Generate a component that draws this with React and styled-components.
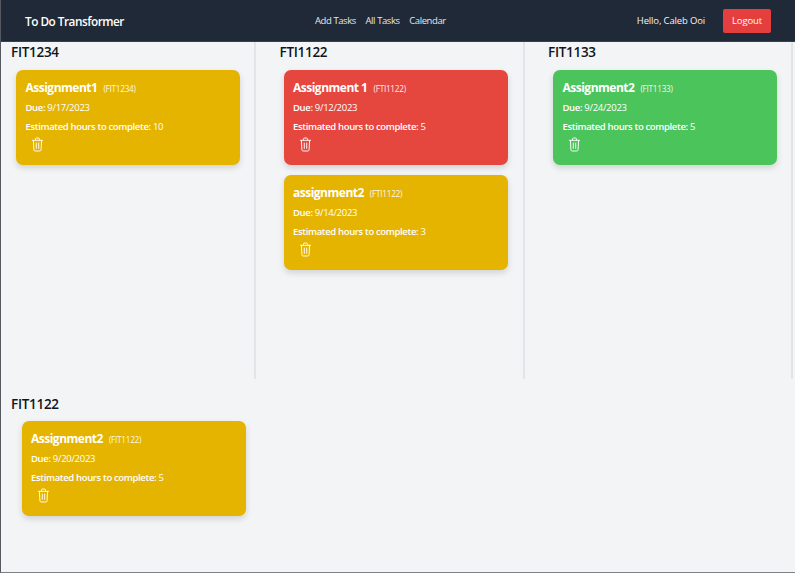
import React from "react";
import styled, { createGlobalStyle } from "styled-components";

const GlobalStyle = createGlobalStyle`
  html, body {
    margin: 0;
    padding: 0;
    height: 100%;
    background: #f3f4f6;
  }
  body {
    font-family: "Open Sans", "Noto Sans", sans-serif;
  }
`;

const Page = styled.div`
  width: 795px;
  height: 573px;
  box-sizing: border-box;
  overflow: hidden;
  background: #f3f4f6;
  border-left: 1px solid #55595f;
  border-bottom: 1px solid #7d8085;
`;

const Nav = styled.nav`
  height: 42px;
  box-sizing: border-box;
  background: #1f2937;
  border-bottom: 1px solid #374151;
  display: flex;
  justify-content: space-between;
  align-items: center;
  padding: 0 24px;
  color: #fff;
`;

const Brand = styled.div`
  font-size: 11.8px;
  font-weight: 600;
  letter-spacing: -0.5px;
`;

const NavLinks = styled.div`
  display: flex;
  gap: 9.5px;
  font-size: 9.5px;
  letter-spacing: -0.4px;
  color: #e5e7eb;
`;

const UserArea = styled.div`
  display: flex;
  align-items: center;
  gap: 18px;
  font-size: 9.5px;
  letter-spacing: -0.15px;
  color: #f3f4f6;
`;

const LogoutButton = styled.button`
  width: 48px;
  height: 24px;
  border: 0;
  padding: 0;
  border-radius: 2px;
  background: #e53e3e;
  color: #fff;
  font: inherit;
  letter-spacing: inherit;
`;

const Columns = styled.div`
  display: grid;
  grid-template-columns: repeat(3, 255px);
  column-gap: 13.5px;
  height: 337px;
`;

const Column = styled.section`
  box-sizing: border-box;
  padding-left: 10px;
  border-right: 2px solid #e2e4e8;
`;

const LowerColumn = styled.section`
  box-sizing: border-box;
  width: 268px;
  padding: 15px 0 0 10px;
`;

const Heading = styled.h2`
  margin: 0;
  font-size: 13.5px;
  line-height: 20px;
  font-weight: 600;
  letter-spacing: -0.3px;
  color: #0f1520;
`;

const Stack = styled.div`
  display: flex;
  flex-direction: column;
  gap: 10px;
  margin: ${props => props.$top}px 0 0 ${props => props.$indent}px;
`;

const Card = styled.article`
  width: 224px;
  height: 95px;
  box-sizing: border-box;
  padding: 10px 9.5px;
  border-radius: 7px;
  background: ${props => props.$color};
  box-shadow: 0 3px 6px rgba(0, 0, 0, 0.14);
  color: #fff;
`;

const TitleRow = styled.div`
  display: flex;
  align-items: baseline;
  gap: 6px;
  height: 16px;
`;

const Title = styled.span`
  font-size: 12px;
  line-height: 16px;
  font-weight: 700;
  letter-spacing: -0.5px;
`;

const Code = styled.span`
  font-size: 8.2px;
  letter-spacing: -0.25px;
  opacity: 0.9;
`;

const Line = styled.div`
  margin-top: 5px;
  font-size: 9.5px;
  line-height: 14px;
  font-weight: 400;
  letter-spacing: -0.3px;

  b {
    font-weight: 600;
    letter-spacing: -0.35px;
  }
`;

const DeleteButton = styled.button`
  display: block;
  border: 0;
  background: none;
  padding: 0;
  margin: 3px 0 0 5.5px;
  width: 13px;
  height: 15px;
  color: #fff;
`;

const TrashIcon = () => (
  <svg viewBox="0 0 14 16" width="13" height="15" fill="none" stroke="currentColor" strokeWidth="1" strokeLinecap="round" strokeLinejoin="round">
    <path d="M1.5 3.5h11" />
    <path d="M4.8 3.3V2.2c0-.7.5-1.2 1.2-1.2h2c.7 0 1.2.5 1.2 1.2v1.1" />
    <path d="M2.6 3.7l.5 9.9c.1.8.6 1.4 1.4 1.4h5c.8 0 1.3-.6 1.4-1.4l.5-9.9" />
    <path d="M5.7 6.4v5.8M8.3 6.4v5.8" />
  </svg>
);

const YELLOW = "#e5b400";
const RED = "#e5473e";
const GREEN = "#4cc45c";

const TaskCard = ({ title, code, due, hours, color }) => (
  <Card $color={color}>
    <TitleRow>
      <Title>{title}</Title>
      <Code>({code})</Code>
    </TitleRow>
    <Line>
      <b>Due:</b> {due}
    </Line>
    <Line>
      <b>Estimated hours to complete:</b> {hours}
    </Line>
    <DeleteButton aria-label="Delete">
      <TrashIcon />
    </DeleteButton>
  </Card>
);

const topRow = [
  {
    unit: "FIT1234",
    indent: 5,
    tasks: [{ title: "Assignment1", code: "FIT1234", due: "9/17/2023", hours: 10, color: YELLOW }],
  },
  {
    unit: "FTI1122",
    indent: 4,
    tasks: [
      { title: "Assignment 1", code: "FTI1122", due: "9/12/2023", hours: 5, color: RED },
      { title: "assignment2", code: "FTI1122", due: "9/14/2023", hours: 3, color: YELLOW },
    ],
  },
  {
    unit: "FIT1133",
    indent: 5,
    tasks: [{ title: "Assignment2", code: "FIT1133", due: "9/24/2023", hours: 5, color: GREEN }],
  },
];

export default function App() {
  return (
    <Page>
      <GlobalStyle />
      <Nav>
        <Brand>To Do Transformer</Brand>
        <NavLinks>
          <span>Add Tasks</span>
          <span>All Tasks</span>
          <span>Calendar</span>
        </NavLinks>
        <UserArea>
          <span>Hello, Caleb Ooi</span>
          <LogoutButton>Logout</LogoutButton>
        </UserArea>
      </Nav>
      <Columns>
        {topRow.map(col => (
          <Column key={col.unit}>
            <Heading>{col.unit}</Heading>
            <Stack $indent={col.indent} $top={8}>
              {col.tasks.map(task => (
                <TaskCard key={task.title} {...task} />
              ))}
            </Stack>
          </Column>
        ))}
      </Columns>
      <LowerColumn>
        <Heading>FIT1122</Heading>
        <Stack $indent={10.5} $top={7}>
          <TaskCard title="Assignment2" code="FIT1122" due="9/20/2023" hours={5} color={YELLOW} />
        </Stack>
      </LowerColumn>
    </Page>
  );
}
